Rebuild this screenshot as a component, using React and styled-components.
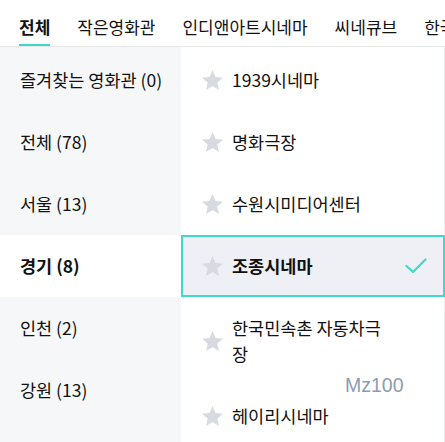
import React from "react";
import styled, { createGlobalStyle } from "styled-components";

const Global = createGlobalStyle`
  html, body { margin: 0; padding: 0; background: #fff; }
  body { font-family: "Noto Sans CJK KR", "Noto Sans", sans-serif; color: #111; }
  * { box-sizing: border-box; }
`;

const Page = styled.div`
  width: 445px;
  height: 442px;
  overflow: hidden;
  display: flex;
  flex-direction: column;
`;

const TabBar = styled.div`
  display: flex;
  gap: 27px;
  padding-left: 19px;
  height: 47px;
  border-bottom: 1px solid #e7e8ea;
  white-space: nowrap;
  overflow: hidden;
  flex-shrink: 0;
`;

const Tab = styled.div`
  font-size: 17px;
  line-height: 26px;
  padding-top: 14px;
  height: 46px;
  font-weight: ${(p) => (p.$active ? 700 : 400)};
  border-bottom: 2px solid ${(p) => (p.$active ? "#3fd8c6" : "transparent")};
  flex-shrink: 0;
`;

const Body = styled.div`
  flex: 1;
  display: grid;
  grid-template-columns: 181px 1fr;
  min-height: 0;
`;

const RegionList = styled.div`
  background: #f6f7f9;
  padding-top: 2px;
`;

const Region = styled.div`
  height: 62px;
  padding: 18px 0 18px 20px;
  font-size: 17.5px;
  line-height: 26px;
  background: ${(p) => (p.$active ? "#fff" : "transparent")};
  font-weight: ${(p) => (p.$active ? 700 : 400)};
`;

const TheaterList = styled.div`
  position: relative;
  padding-top: 2px;
  border-right: 1px solid #eceef1;
`;

const Theater = styled.div`
  display: flex;
  align-items: center;
  min-height: 62px;
  padding: 16px 18px 16px 21px;
  background: ${(p) => (p.$active ? "#eef0f5" : "transparent")};
  border: 2px solid ${(p) => (p.$active ? "#3fdac9" : "transparent")};
  margin-right: -1px;
`;

const StarWrap = styled.span`
  width: 21px;
  height: 20px;
  flex-shrink: 0;
  margin-left: -2px;
  margin-right: 9px;
  display: flex;
`;

const Name = styled.span`
  flex: 1;
  font-size: 17.5px;
  line-height: 26px;
  font-weight: ${(p) => (p.$active ? 700 : 400)};
  margin-right: 12px;
`;

const CheckWrap = styled.span`
  width: 22px;
  height: 16px;
  flex-shrink: 0;
  display: flex;
  margin-right: -2px;
  visibility: ${(p) => (p.$show ? "visible" : "hidden")};
`;

const Badge = styled.div`
  position: absolute;
  left: 164px;
  top: 327px;
  font-family: "Liberation Sans", Arial, sans-serif;
  font-size: 19.5px;
  line-height: 22px;
  color: #8c9cb1;
`;

const Star = () => (
  <svg width="21" height="20" viewBox="2 2 20 19">
    <path
      d="M12 17.27L18.18 21l-1.64-7.03L22 9.24l-7.19-.61L12 2 9.19 8.63 2 9.24l5.46 4.73L5.82 21z"
      fill="#d7dae1"
    />
  </svg>
);

const Check = () => (
  <svg width="22" height="16" viewBox="0 0 22 16">
    <polyline
      points="1.5,8 8,14 20.5,1.5"
      fill="none"
      stroke="#3fdac9"
      strokeWidth="2.2"
      strokeLinecap="round"
      strokeLinejoin="round"
    />
  </svg>
);

const tabs = ["전체", "작은영화관", "인디앤아트시네마", "씨네큐브", "한국영화"];
const regions = [
  "즐겨찾는 영화관 (0)",
  "전체 (78)",
  "서울 (13)",
  "경기 (8)",
  "인천 (2)",
  "강원 (13)",
];
const theaters = [
  "1939시네마",
  "명화극장",
  "수원시미디어센터",
  "조종시네마",
  "한국민속촌 자동차극장",
  "헤이리시네마",
];

export default function App() {
  return (
    <Page>
      <Global />
      <TabBar>
        {tabs.map((t, i) => (
          <Tab key={t} $active={i === 0}>
            {t}
          </Tab>
        ))}
      </TabBar>
      <Body>
        <RegionList>
          {regions.map((r, i) => (
            <Region key={r} $active={i === 3}>
              {r}
            </Region>
          ))}
        </RegionList>
        <TheaterList>
          {theaters.map((t, i) => (
            <Theater key={t} $active={i === 3}>
              <StarWrap>
                <Star />
              </StarWrap>
              <Name $active={i === 3}>{t}</Name>
              <CheckWrap $show={i === 3}>
                <Check />
              </CheckWrap>
            </Theater>
          ))}
          <Badge>Mz100</Badge>
        </TheaterList>
      </Body>
    </Page>
  );
}
